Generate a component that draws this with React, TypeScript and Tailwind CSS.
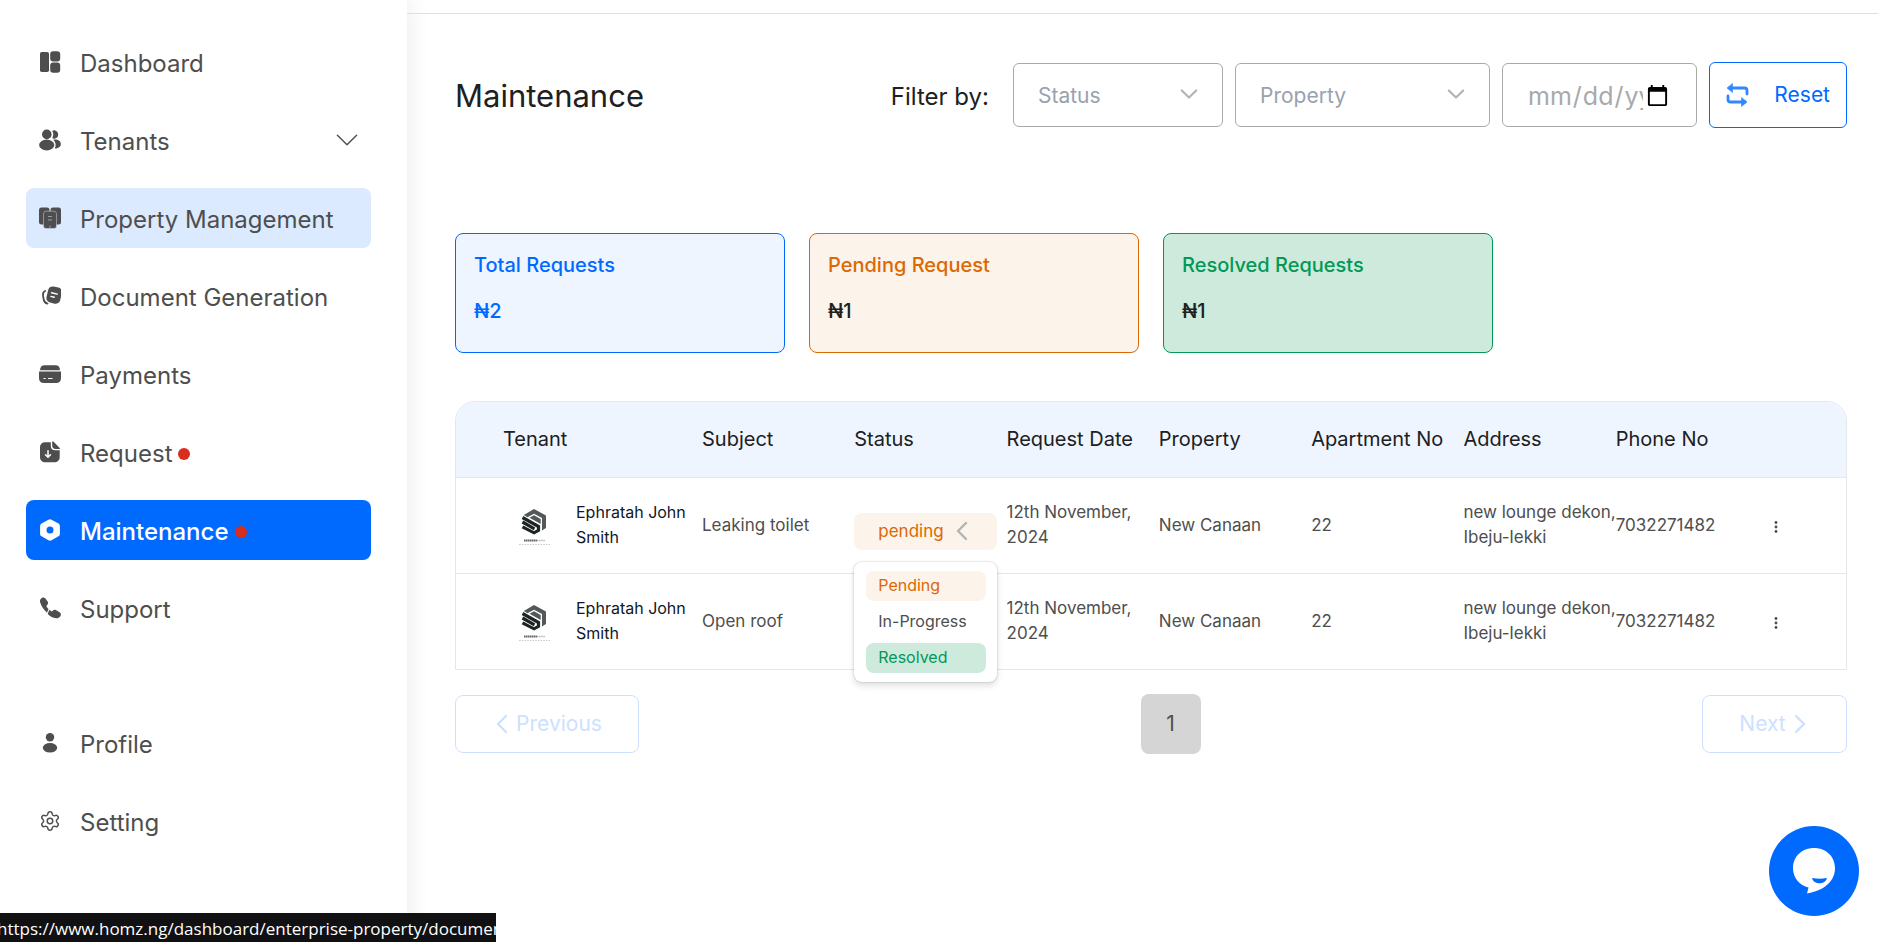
import { useState, type ReactNode } from "react";
import { Settings } from "lucide-react";

function DashboardIcon() {
  return (
    <svg width="22" height="22" viewBox="0 0 22 22" fill="currentColor" aria-hidden="true">
      <rect x="1" y="1" width="9" height="20" rx="1.8" />
      <rect x="11.2" y="0.200" width="10" height="10.200" rx="3" />
      <rect x="11.2" y="11.600" width="10" height="10.200" rx="3" />
    </svg>
  );
}

function TenantsIcon() {
  return (
    <svg width="22" height="22" viewBox="0 0 22 22" fill="currentColor" aria-hidden="true">
      <circle cx="7.8" cy="5.4" r="4.8" />
      <path d="M13.2 1.9a4.1 4.1 0 1 1 0 7.2 7 7 0 0 0 0-7.2Z" />
      <ellipse cx="7.7" cy="16" rx="7.6" ry="5.4" />
      <path d="M14.2 10.7c4.4-.6 7.6 1.4 7.6 4.2s-2.6 4.5-6 4.5c1.6-3 1-6.500-1.600-8.700Z" />
    </svg>
  );
}

function PropertyIcon() {
  return (
    <svg width="22" height="22" viewBox="0 0 22 22" fill="currentColor" aria-hidden="true">
      <rect x="0" y="0.500" width="10.500" height="17" rx="2.500" />
      <rect x="11.500" y="0.500" width="10.500" height="17" rx="2.500" />
      <rect x="4.500" y="4.200" width="13" height="17.300" rx="2.500" stroke="#dbeafe" strokeOpacity=".55" strokeWidth=".8" />
      <path d="M9 9.500h4M9 13h4M11 18.500v3" stroke="#dbeafe" strokeWidth="1" opacity=".5" />
    </svg>
  );
}

function DocumentIcon() {
  return (
    <svg width="22" height="22" viewBox="0 0 22 22" aria-hidden="true">
      <rect x="8.200" y="1.800" width="14" height="16.500" rx="4.600" transform="rotate(13 15 10)" fill="currentColor" />
      <path d="M6.200 6C4.300 6.600 3.700 8 4 10.500l.7 4c.4 2.500 1.500 3.600 3.800 4.100" fill="none" stroke="currentColor" strokeWidth="1.800" strokeLinecap="round" />
      <path d="m12.500 7.700 5.800 1.400M11.900 11.400l3.400.8" stroke="white" strokeWidth="1.400" strokeLinecap="round" />
    </svg>
  );
}

function PaymentsIcon() {
  return (
    <svg width="22" height="22" viewBox="0 0 22 22" fill="currentColor" aria-hidden="true">
      <path d="M1 7.200C1 4.100 2.600 2.200 5.600 2.200h10.800c3 0 4.600 1.900 4.600 5Z" />
      <path d="M0 8.500h22v6.500c0 3.200-1.800 5-5 5H5c-3.200 0-5-1.800-5-5Z" />
      <path d="M4.500 15.500h2.200M9 15.500h4.500" stroke="white" strokeWidth="1" />
    </svg>
  );
}

function RequestIcon() {
  return (
    <svg width="22" height="22" viewBox="0 0 22 22" aria-hidden="true">
      <path d="M6.500 1.200h5.300v3.500c0 3 1.500 4.600 4.600 4.600h4.300v6.500c0 3.600-2 5.500-5.600 5.500H6.600C3 21.300 1 19.400 1 15.800V6.700c0-3.600 2-5.500 5.500-5.500Z" fill="currentColor" />
      <path d="M13.200.9c0-.6.700-.8 1.200-.3l6.300 6.300c.5.500.2 1.100-.4 1.100h-3.700c-2.300 0-3.400-1.200-3.400-3.400Z" fill="currentColor" />
      <path d="M9 9.800v6M6.500 13.800 9 16.300l2.500-2.500" fill="none" stroke="white" strokeWidth="1.500" strokeLinecap="round" strokeLinejoin="round" />
    </svg>
  );
}

function MaintenanceIcon() {
  return (
    <svg width="22" height="22" viewBox="0 0 22 22" fill="currentColor" aria-hidden="true">
      <path fillRule="evenodd" d="M9 .9c1.500-.9 2.500-.9 4 0l6 3.300c1.400.8 1.900 1.600 1.900 3.200v7c0 1.600-.5 2.400-1.900 3.200l-6 3.500c-1.500.9-2.500.9-4 0l-6-3.500c-1.400-.8-1.900-1.600-1.900-3.200v-7c0-1.600.5-2.400 1.900-3.200ZM11 7.500a3.500 3.500 0 1 0 0 7 3.500 3.500 0 0 0 0-7Z" />
    </svg>
  );
}

function SupportIcon() {
  return (
    <svg width="22" height="22" viewBox="0 0 22 22" fill="currentColor" aria-hidden="true">
      <path d="M4.200.5c1.200-.1 2 .6 2.900 1.900l1.500 2.200c.9 1.400.6 2.400-.4 3.300-.8.800-.9 1.200-.4 2 .4.700 1 1.500 1.700 2.200L8 15.700C4.600 12.700 2.200 8.900 1.200 5.500.5 3 2 .7 4.200.5Z" />
      <path d="m10.300 12.800 1.600 1.300c.7.500 1.200.4 1.900-.3 1-1 2-1.300 3.400-.5l3 1.700c1.500.9 2 2 1.500 3.400-.8 2.200-3.200 3.300-6 2.700-2.400-.5-4.700-1.800-7-4.100Z" />
    </svg>
  );
}

function ProfileIcon() {
  return (
    <svg width="22" height="22" viewBox="0 0 22 22" fill="currentColor" aria-hidden="true">
      <circle cx="11" cy="5.200" r="4.200" />
      <ellipse cx="11" cy="15.800" rx="7.200" ry="4.800" />
    </svg>
  );
}

function Chevron({ dir, className }: { dir: "down" | "left" | "right"; className: string }) {
  const paths = { down: "M2 6 10 14 18 6", left: "M14 2 6 10 14 18", right: "M6 2 14 10 6 18" };
  return (
    <svg viewBox="0 0 20 20" fill="none" stroke="currentColor" strokeLinecap="round" strokeLinejoin="round" className={className} aria-hidden="true">
      <path d={paths[dir]} />
    </svg>
  );
}

function ResetIcon() {
  return (
    <svg width="24" height="24" viewBox="0 0 24 24" aria-hidden="true" className="opacity-80">
      <path d="M5 5h13.500c1.700 0 2.500.8 2.500 2.500V11M19 19H4.500C2.800 19 2 18.200 2 16.500V13" fill="none" stroke="#006aff" strokeWidth="2.800" strokeLinecap="round" strokeLinejoin="round" />
      <path d="M1 5 6.500.5v9ZM21 19l-5.500-4.500v9Z" fill="#006aff" stroke="#006aff" strokeWidth=".6" />
    </svg>
  );
}

function TenantLogo() {
  return (
    <svg width="36" height="42" viewBox="0 0 36 42" role="img" aria-label="Ephratah logo" className="shrink-0">
      <path d="M18 5 30 11.500V24l-4 2.500V14l-8-4.300-6.500 3.500-3.700-2.200Z" fill="#54585a" />
      <path d="M13.500 13.800 18 11.300l6.700 3.700v5Z" fill="#54585a" />
      <path d="m6.500 13.500 16 9v3.800L18 28.800 6.500 22.800M6.500 18l12 6.800" fill="none" stroke="#1d2425" strokeWidth="3.200" />
      <path d="M8 36.500h13" stroke="#666" strokeWidth="1.800" strokeDasharray="1.500 .4" />
      <path d="M21 36.500h8" stroke="#bbb" strokeWidth="1.600" strokeDasharray="1.300 .5" />
      <path d="M3 40.500h31" stroke="#ccc" strokeWidth="1.200" strokeDasharray="1.500 1.200" />
    </svg>
  );
}

interface NavEntry {
  label: string;
  icon: ReactNode;
  dot?: boolean;
  expandable?: boolean;
}

const mainNav: NavEntry[] = [
  { label: "Dashboard", icon: <DashboardIcon /> },
  { label: "Tenants", icon: <TenantsIcon />, expandable: true },
  { label: "Property Management", icon: <PropertyIcon /> },
  { label: "Document Generation", icon: <DocumentIcon /> },
  { label: "Payments", icon: <PaymentsIcon /> },
  { label: "Request", icon: <RequestIcon />, dot: true },
  { label: "Maintenance", icon: <MaintenanceIcon />, dot: true },
  { label: "Support", icon: <SupportIcon /> },
];

const accountNav: NavEntry[] = [
  { label: "Profile", icon: <ProfileIcon /> },
  { label: "Setting", icon: <Settings size={22} strokeWidth={1.6} aria-hidden="true" /> },
];

function NavItem({ entry }: { entry: NavEntry }) {
  const tone =
    entry.label === "Maintenance"
      ? "bg-[#006aff] text-white font-medium"
      : entry.label === "Property Management"
        ? "bg-blue-100 text-[#4e4e4e]"
        : "text-[#4e4e4e]";
  return (
    <li>
      <a href="#" className={`flex h-[60px] items-center gap-[19px] rounded-lg pr-3 pl-[13px] text-2xl whitespace-nowrap ${tone}`}>
        <span className="flex w-[22px] shrink-0 justify-center">{entry.icon}</span>
        <span className="flex items-center gap-1.5 pt-[3px]">
          {entry.label}
          {entry.dot && <span className="size-3 rounded-full bg-[#d92d20]" />}
        </span>
        {entry.expandable && <Chevron dir="down" className="ml-auto size-6 stroke-[1.2]" />}
      </a>
    </li>
  );
}

function FilterSelect({ label, className }: { label: string; className: string }) {
  return (
    <div className={`relative ${className}`}>
      <select aria-label={label} className="h-16 w-full appearance-none rounded-md border border-[#a9a9a9] bg-white pt-0.5 pl-6 text-[21px] text-gray-400">
        <option>{label}</option>
      </select>
      <Chevron dir="down" className="pointer-events-none absolute top-[22px] right-[25px] size-[18px] stroke-[2.4] text-[#b3b3b3]" />
    </div>
  );
}

const cards = [
  { title: "Total Requests", value: "₦2", box: "border-[#006aff] bg-[#eef5ff] text-[#006aff]", valueTone: "" },
  { title: "Pending Request", value: "₦1", box: "border-[#dc6803] bg-[#fcf3eb] text-[#dc6803]", valueTone: "text-[#202020]" },
  { title: "Resolved Requests", value: "₦1", box: "border-[#039855] bg-[#cdeadd] text-[#039855]", valueTone: "text-[#202020]" },
];

const columns = ["Subject", "Status", "Request Date", "Property", "Apartment No", "Address", "Phone No"];
const requests = [
  { id: 1, subject: "Leaking toilet" },
  { id: 2, subject: "Open roof" },
];

interface StatusCellProps {
  open: boolean;
  covered: boolean;
  onToggle: () => void;
}

function StatusCell({ open, covered, onToggle }: StatusCellProps) {
  return (
    <div className={`relative mt-3 w-[143px] ${covered ? "invisible" : ""}`}>
      <button type="button" aria-expanded={open} onClick={onToggle} className="flex h-[37px] w-full items-center gap-2 rounded-lg bg-[#fcf3eb] pl-6 text-[17px] text-[#dc6803]">
        {covered ? null : "pending"}
        <Chevron dir="left" className="size-5 stroke-[2.4] text-[#b3b3b3]" />
      </button>
      {open && (
        <div role="menu" className="absolute top-[49px] left-0 z-10 flex w-full flex-col gap-1.5 rounded-lg bg-white py-[9px] pr-[11px] pl-3 text-[16px] shadow-[0_0_2px_rgba(0,0,0,0.25),0_4px_6px_rgba(0,0,0,0.12)]">
          <button type="button" role="menuitem" className="h-[30px] rounded-lg bg-[#fcf3eb] pl-3 text-left text-[#dc6803]">Pending</button>
          <button type="button" role="menuitem" className="h-[30px] rounded-lg pl-3 text-left text-[#4e4e4e]">In-Progress</button>
          <button type="button" role="menuitem" className="h-[30px] rounded-lg bg-[#cdeadd] pl-3 text-left text-[#039855]">Resolved</button>
        </div>
      )}
    </div>
  );
}

export default function App() {
  const [openRow, setOpenRow] = useState<number | null>(1);
  return (
    <div className="flex min-h-screen bg-white font-['Inter',sans-serif] text-[#202020]">
      <aside className="w-[407px] shrink-0 pt-8 pr-9 pl-[26px] shadow-[0_0_24px_rgba(0,0,0,0.09)]">
        <nav>
          <ul className="flex flex-col gap-[18px]">
            {mainNav.map((e) => <NavItem key={e.label} entry={e} />)}
          </ul>
          <ul className="mt-[75px] flex flex-col gap-[18px]">
            {accountNav.map((e) => <NavItem key={e.label} entry={e} />)}
          </ul>
        </nav>
      </aside>

      <div className="min-w-0 flex-1">
        <div className="h-3.5 border-b border-[#dfdfdf]" />
        <main className="pt-12 pr-[31px] pl-12">
          <header className="flex items-center justify-between">
            <h1 className="pt-0.5 text-[31px]">Maintenance</h1>
            <div className="flex items-center gap-3">
              <span className="mr-3 pt-[3px] text-2xl">Filter by:</span>
              <FilterSelect label="Status" className="w-[210px]" />
              <FilterSelect label="Property" className="w-[255px]" />
              <input type="date" aria-label="Request date" className="h-16 w-[195px] rounded-md border border-[#a9a9a9] bg-white pt-[3px] pr-6 pl-6 text-[25px] text-[#a9a9a9]" />
              <button type="button" className="flex h-[66px] w-[138px] items-center justify-between rounded-md border border-[#006aff] pr-4 pl-4 text-[21px] text-[#006aff]">
                <ResetIcon />
                Reset
              </button>
            </div>
          </header>

          <section className="mt-[105px] flex gap-6">
            {cards.map((c) => (
              <article key={c.title} className={`flex h-[120px] w-[330px] flex-col gap-4 rounded-lg border px-[18px] pt-4 text-xl ${c.box}`}>
                <h2 className="leading-[30px] font-medium">{c.title}</h2>
                <p className={`leading-[30px] font-medium ${c.valueTone}`}>{c.value}</p>
              </article>
            ))}
          </section>

          <section className="mt-12 rounded-t-[20px] border border-gray-200">
            <table className="w-full table-fixed text-left">
              <colgroup>
                <col className="w-[246px]" />
                {columns.map((c) => <col key={c} />)}
                <col className="w-[78px]" />
              </colgroup>
              <thead>
                <tr className="h-[75px] text-xl whitespace-nowrap">
                  <th className="rounded-tl-[20px] bg-[#eef5ff] pl-[47px] font-normal">Tenant</th>
                  {columns.map((c) => <th key={c} className="bg-[#eef5ff] font-normal">{c}</th>)}
                  <th className="rounded-tr-[20px] bg-[#eef5ff]" aria-label="Actions" />
                </tr>
              </thead>
              <tbody>
                {requests.map((r) => (
                  <tr key={r.id} className="h-24 border-t border-gray-200 text-[17px] leading-[25px] text-[#4e4e4e]">
                    <td className="pl-[60px]">
                      <div className="flex items-center gap-6 text-base leading-[25px] whitespace-nowrap text-[#101828]">
                        <TenantLogo />
                        <span>Ephratah John<br />Smith</span>
                      </div>
                    </td>
                    <td className="whitespace-nowrap">{r.subject}</td>
                    <td>
                      <StatusCell
                        open={openRow === r.id}
                        covered={openRow === r.id - 1}
                        onToggle={() => setOpenRow(openRow === r.id ? null : r.id)}
                      />
                    </td>
                    <td className="whitespace-nowrap">12th November,<br />2024</td>
                    <td>New Canaan</td>
                    <td>22</td>
                    <td className="whitespace-nowrap">new lounge dekon,<br />Ibeju-lekki</td>
                    <td>7032271482</td>
                    <td className="pt-1">
                      <button type="button" aria-label="Row actions" className="flex w-4 justify-center">
                        <svg width="4" height="14" viewBox="0 0 4 14" fill="#4e4e4e">
                          <circle cx="2" cy="2.500" r="1.400" />
                          <circle cx="2" cy="7" r="1.400" />
                          <circle cx="2" cy="11.500" r="1.400" />
                        </svg>
                      </button>
                    </td>
                  </tr>
                ))}
              </tbody>
            </table>
          </section>

          <nav aria-label="Pagination" className="mt-6 flex items-center justify-between text-[21px]">
            <button type="button" className="flex h-[58px] w-[184px] items-center justify-center gap-1 rounded-lg border border-[#cce1ff] text-[#cce1ff]">
              <Chevron dir="left" className="size-5 stroke-[2.4]" />
              Previous
            </button>
            <button type="button" aria-current="page" className="size-[60px] rounded-lg bg-[#d5d5d5] text-[#4e4e4e]">1</button>
            <button type="button" className="flex h-[58px] w-[145px] items-center justify-center gap-1 rounded-lg border border-[#cce1ff] text-[#cce1ff]">
              Next
              <Chevron dir="right" className="size-5 stroke-[2.4]" />
            </button>
          </nav>
        </main>
      </div>

      <button type="button" aria-label="Open chat" className="fixed right-[19px] bottom-[26px] flex size-[90px] items-center justify-center rounded-full bg-[#006aff]">
        <svg width="46" height="48" viewBox="0 0 46 48" aria-hidden="true">
          <path d="M23 1C11 1 2 9.500 2 21c0 10 6.500 17.500 15.500 19.500L16 46.500c12-2 28-9 28-25.500C44 9.500 35 1 23 1Z" fill="white" />
          <path d="M21 31c5 1 10 1 15 0-1.500 7-13.500 7-15 0Z" fill="#006aff" />
        </svg>
      </button>

      <div className="fixed bottom-0 left-0 h-[29px] w-[496px] overflow-hidden bg-[#111113] font-['Open_Sans',sans-serif] text-[17px] leading-8 whitespace-nowrap text-white">
        <span className="-ml-[3px]">https://www.homz.ng/dashboard/enterprise-property/document</span>
      </div>
    </div>
  );
}
